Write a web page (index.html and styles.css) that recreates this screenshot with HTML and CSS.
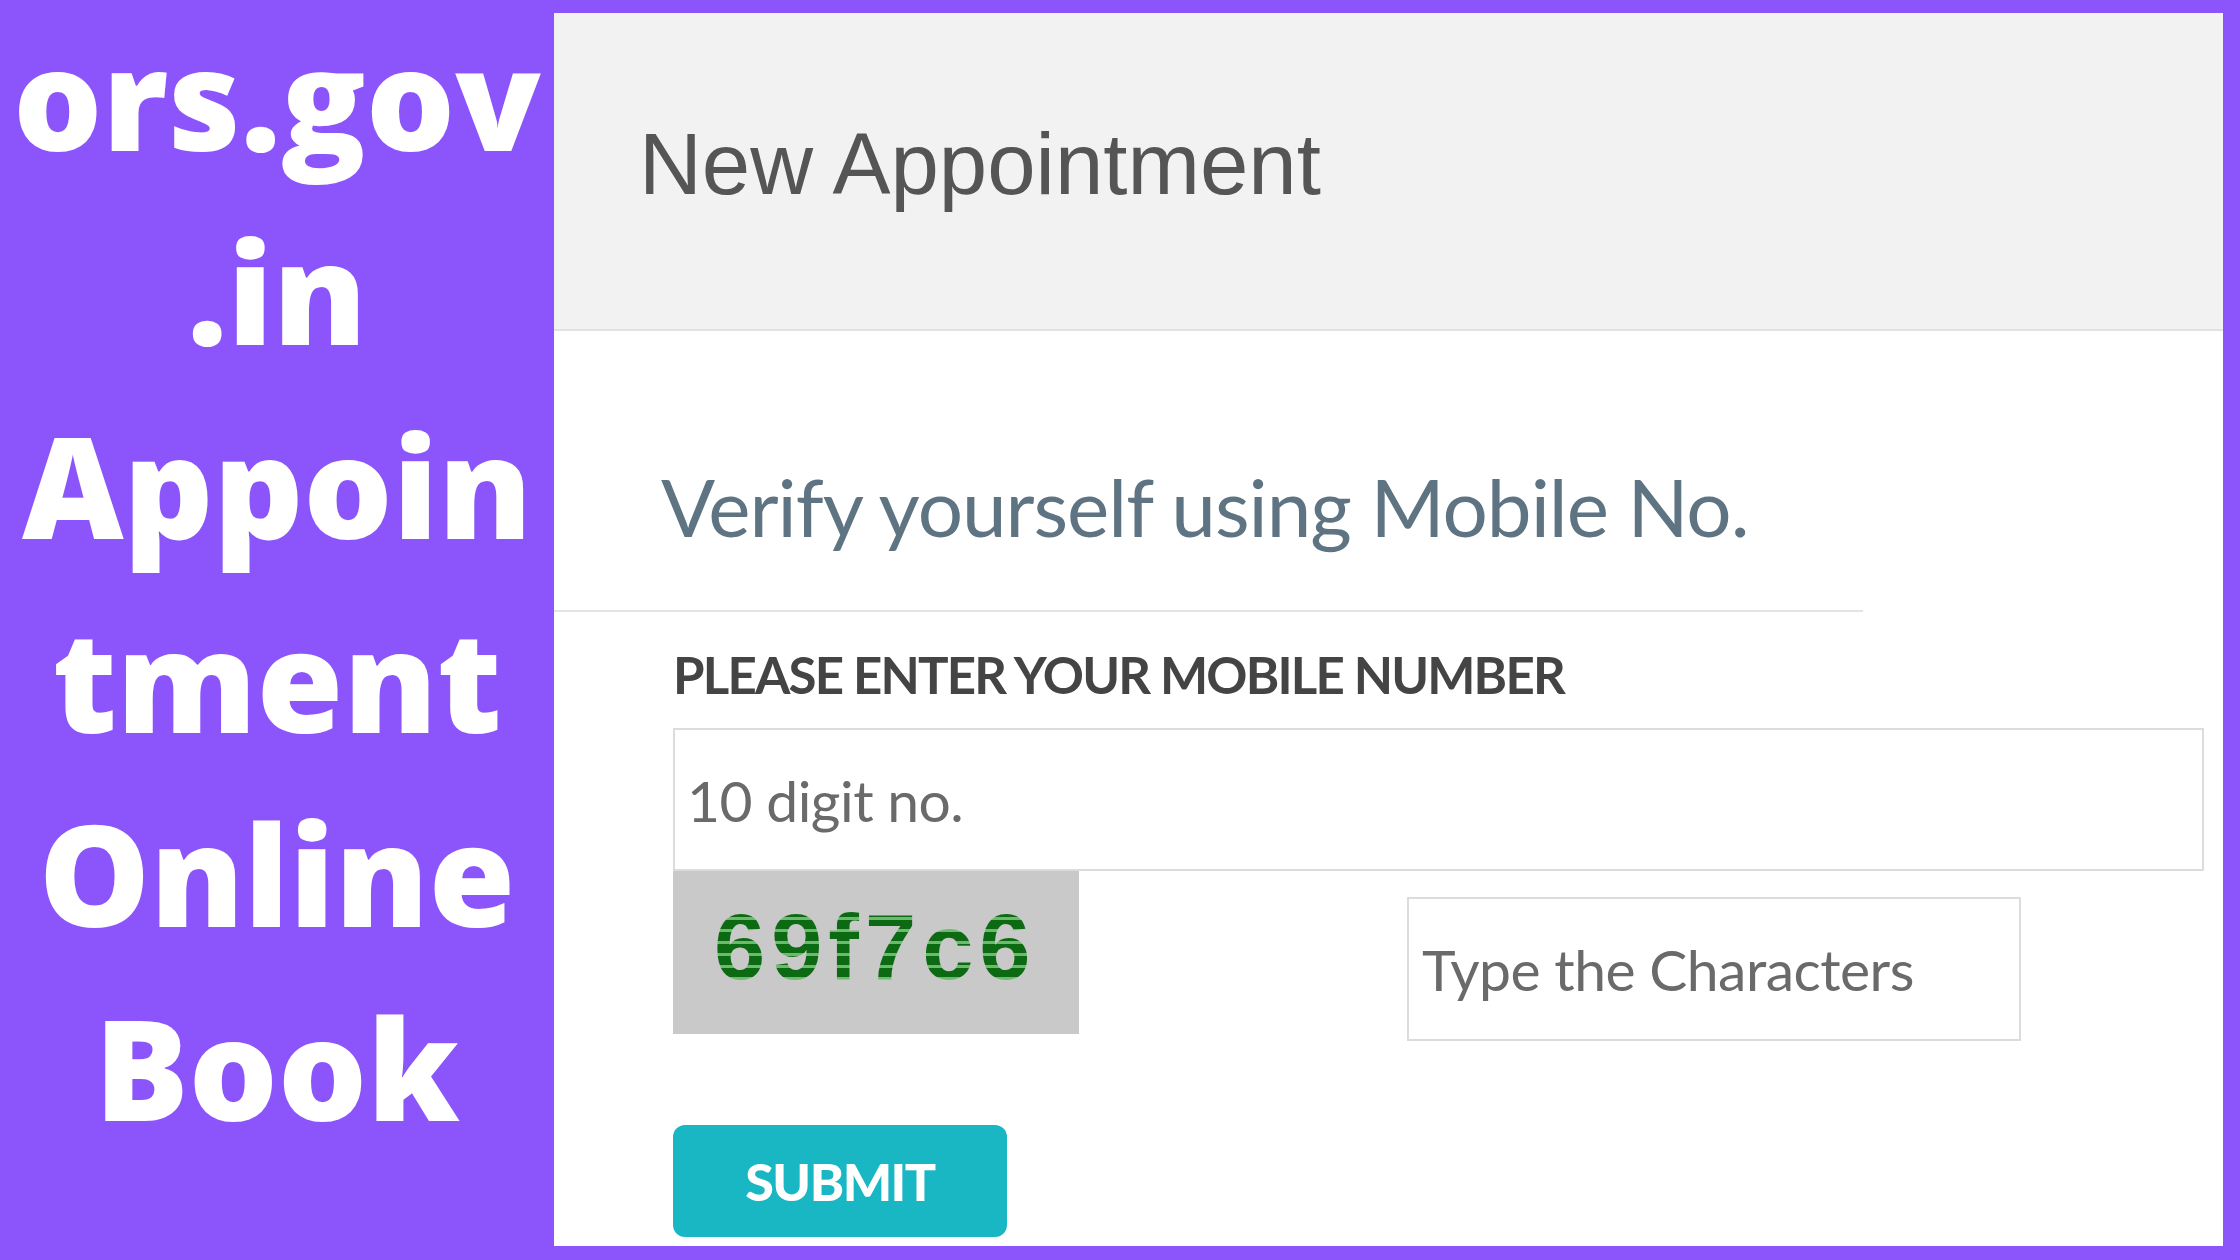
FILE: index.html
```html
<!DOCTYPE html>
<html lang="en">
<head>
  <meta charset="UTF-8">
  <meta name="viewport" content="width=device-width, initial-scale=1">
  <title>ors.gov.in Appointment Online Book</title>
  <link rel="stylesheet" href="styles.css">
</head>
<body>

<div class="page">
  <div class="promo">ors.gov<br>.in<br>Appoin<br>tment<br>Online<br>Book</div>

  <div class="card">
    <div class="card-head">
      <h1>New Appointment</h1>
    </div>

    <div class="card-body">
      <h2 class="verify-title">Verify yourself using Mobile No.</h2>
      <hr class="divider">

      <form class="verify-form">
        <label for="mobile">PLEASE ENTER YOUR MOBILE NUMBER</label>
        <input type="text" id="mobile" class="field" placeholder="10 digit no.">

        <div class="captcha-row">
          <div class="captcha"><span>69f7c6</span></div>
          <input type="text" class="field captcha-input" placeholder="Type the Characters">
        </div>

        <button type="submit">SUBMIT</button>
      </form>
    </div>
  </div>
</div>

</body>
</html>
```

FILE: styles.css
```css
body {
  margin: 0;
  background: #8c55fb;
  width: 2240px;
  height: 1260px;
  overflow: hidden;
}
.page {
  display: flex;
  height: 1260px;
}
.promo {
  width: 554px;
  flex-shrink: 0;
  text-align: center;
  font-family: "Open Sans", sans-serif;
  font-weight: 800;
  font-size: 140px;
  line-height: 194px;
  color: #fff;
}
.card {
  flex: 1;
  margin: 13px 17px 14px 0;
  background: #fff;
  display: flex;
  flex-direction: column;
}
.card-head {
  height: 300px;
  padding: 0 0 16px 85px;
  display: flex;
  align-items: center;
  background: #f2f2f2;
  border-bottom: 2px solid #e2e2e2;
}
.card-head h1 {
  margin: 0;
  font-family: "Liberation Sans", Arial, sans-serif;
  font-weight: normal;
  font-size: 87px;
  line-height: 1;
  color: #555;
}
.card-body {
  flex: 1;
}
.verify-title {
  margin: 127px 0 0 107px;
  font-family: Lato, sans-serif;
  font-weight: normal;
  font-size: 80px;
  letter-spacing: -1px;
  line-height: 1.2;
  color: #5f7482;
}
.divider {
  width: 1309px;
  margin: 56px 0 0 0;
  border: none;
  border-top: 2px solid #e4e4e4;
}
.verify-form {
  padding: 0 19px 0 119px;
}
.verify-form label {
  display: block;
  margin-top: 32px;
  font-family: Lato, sans-serif;
  font-weight: bold;
  font-size: 51px;
  letter-spacing: -1.8px;
  line-height: 1.2;
  color: #444;
}
.field {
  box-sizing: border-box;
  display: block;
  width: 100%;
  height: 143px;
  margin: 23px 0 0 0;
  padding: 0 12px;
  border: 2px solid #dcdcdc;
  font-family: Lato, sans-serif;
  font-size: 57px;
  letter-spacing: -0.5px;
  color: #555;
  background: #fff;
}
.field::placeholder {
  color: #6a6a6a;
}
.captcha-row {
  display: flex;
  align-items: flex-start;
}
.captcha {
  width: 406px;
  height: 163px;
  flex-shrink: 0;
  background: #c9c9c9;
  padding: 30px 0 0 41px;
  box-sizing: border-box;
}
.captcha span {
  font-family: "Liberation Sans", Arial, sans-serif;
  font-weight: bold;
  font-size: 92px;
  letter-spacing: 6px;
  line-height: 1;
  background: repeating-linear-gradient(to bottom, #0c6a12 0 9px, #6fb86f 9px 12px);
  -webkit-background-clip: text;
  background-clip: text;
  color: transparent;
}
.captcha-input {
  width: 614px;
  height: 144px;
  margin: 26px 0 0 328px;
  padding-left: 13px;
}
.verify-form button {
  display: block;
  width: 334px;
  height: 112px;
  margin-top: 84px;
  background: #19b6c4;
  border: none;
  border-radius: 12px;
  font-family: Lato, sans-serif;
  font-weight: 900;
  font-size: 52px;
  letter-spacing: -1.5px;
  color: #fff;
  cursor: pointer;
}
```
